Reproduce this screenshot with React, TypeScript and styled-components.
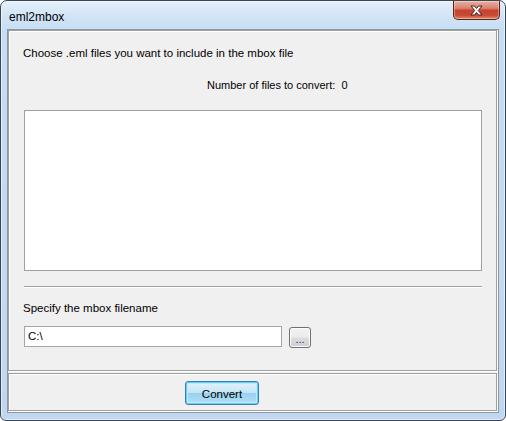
import React from 'react';
import styled, { createGlobalStyle } from 'styled-components';

const GlobalStyle = createGlobalStyle`
  html, body {
    margin: 0;
    padding: 0;
    background: #ffffff;
  }
  body {
    font-family: "Liberation Sans", Arial, sans-serif;
    font-size: 11px;
    color: #000;
  }
`;

const Window = styled.div`
  box-sizing: border-box;
  width: 506px;
  height: 421px;
  display: flex;
  flex-direction: column;
  padding: 0 6px 9px 6px;
  border: 1px solid #3a4656;
  border-radius: 7px 7px 6px 6px;
  background: linear-gradient(180deg, #e4effa 0px, #d3e5f7 14px, #c6ddf3 30px, #bfd7f0 100%);
  box-shadow: inset 0 0 0 1px rgba(255, 255, 255, 0.55);
  overflow: hidden;
`;

const TitleBar = styled.div`
  height: 28px;
  display: flex;
  align-items: flex-start;
  flex-shrink: 0;
`;

const Title = styled.div`
  padding: 9px 0 0 2px;
  font-size: 12px;
  color: #000;
`;

const CloseButton = styled.div`
  margin-left: auto;
  margin-right: -1px;
  width: 47px;
  height: 19px;
  box-sizing: border-box;
  border: 1px solid #5c2219;
  border-top: none;
  border-radius: 0 0 5px 5px;
  background: linear-gradient(180deg, #eab1a4 0%, #d9826f 40%, #c4432f 52%, #cb4a34 80%, #e08a6c 100%);
  box-shadow: inset 0 0 0 1px rgba(255, 255, 255, 0.35);
  display: flex;
  align-items: center;
  justify-content: center;
`;

const Client = styled.div`
  flex: 1;
  display: flex;
  flex-direction: column;
  gap: 2px;
  border: 1px solid #8c96a2;
  background: #f0f0f0;
  padding: 0 1px 1px 0;
`;

const Panel = styled.div<{ $height: number }>`
  box-sizing: border-box;
  height: ${({ $height }) => $height}px;
  border: 1px solid #a0a0a0;
  box-shadow: 1px 1px 0 #ffffff, inset 1px 1px 0 #ffffff;
  display: flex;
  flex-direction: column;
`;

const MainPanel = styled(Panel)`
  padding: 0 14px 0 15px;
`;

const Label = styled.div<{ $top: number; $left?: number; $size?: number }>`
  margin-top: ${({ $top }) => $top}px;
  margin-left: ${({ $left }) => $left ?? -1}px;
  font-size: ${({ $size }) => $size ?? 11.5}px;
  line-height: 13px;
  white-space: pre;
`;

const ListBox = styled.div`
  margin-top: 18px;
  height: 161px;
  box-sizing: border-box;
  border: 1px solid #a0a0a0;
  background: #ffffff;
`;

const Separator = styled.div`
  margin-top: 15px;
  height: 1px;
  background: #a0a0a0;
  border-bottom: 1px solid #ffffff;
`;

const PathRow = styled.div`
  margin-top: 11px;
  display: flex;
  align-items: flex-start;
  gap: 7px;
`;

const TextInput = styled.div`
  box-sizing: border-box;
  width: 258px;
  height: 21px;
  border: 1px solid #a5a5a5;
  background: #ffffff;
  padding: 3px 0 0 3px;
  font-size: 11.5px;
  line-height: 13px;
`;

const SmallButton = styled.div`
  box-sizing: border-box;
  margin-top: 1px;
  width: 22px;
  height: 21px;
  border: 1px solid #707070;
  border-radius: 3px;
  background: linear-gradient(180deg, #f2f2f2 0%, #ebebeb 48%, #dddddd 52%, #cfcfcf 100%);
  box-shadow: inset 0 0 0 1px #fcfcfc;
  display: flex;
  align-items: flex-end;
  justify-content: center;
  padding-bottom: 4px;
  font-size: 11px;
  line-height: 8px;
  color: #1a2a7a;
`;

const BottomPanel = styled(Panel)`
  padding: 7px 0 0 176px;
`;

const DefaultButton = styled.div`
  box-sizing: border-box;
  width: 74px;
  height: 24px;
  border: 1px solid #3c7fb1;
  border-radius: 3px;
  background: linear-gradient(180deg, #e5f4fc 0%, #c4e5f6 48%, #98d1ef 52%, #b6e0f5 100%);
  box-shadow: inset 0 0 0 1px #5ed0f5, inset 0 0 0 2px #c0eafc;
  display: flex;
  align-items: center;
  justify-content: center;
  font-size: 11.5px;
  padding-top: 1px;
`;

function CloseGlyph() {
  return (
    <svg width="13" height="11" viewBox="0 0 13 11">
      <path
        d="M1 1 H4.5 L6.5 3.5 L8.5 1 H12 L8.3 5.5 L12 10 H8.5 L6.5 7.5 L4.5 10 H1 L4.7 5.5 Z"
        fill="#ffffff"
        stroke="#4a1e18"
        strokeWidth="1"
        strokeLinejoin="round"
      />
    </svg>
  );
}

export default function App() {
  const fileCount = 0;
  return (
    <>
      <GlobalStyle />
      <Window>
        <TitleBar>
          <Title>eml2mbox</Title>
          <CloseButton>
            <CloseGlyph />
          </CloseButton>
        </TitleBar>
        <Client>
          <MainPanel $height={341}>
            <Label $top={16}>Choose .eml files you want to include in the mbox file</Label>
            <Label $top={19} $left={183} $size={11}>{`Number of files to convert:  ${fileCount}`}</Label>
            <ListBox />
            <Separator />
            <Label $top={14}>Specify the mbox filename</Label>
            <PathRow>
              <TextInput>C:\</TextInput>
              <SmallButton>...</SmallButton>
            </PathRow>
          </MainPanel>
          <BottomPanel $height={38}>
            <DefaultButton>Convert</DefaultButton>
          </BottomPanel>
        </Client>
      </Window>
    </>
  );
}
